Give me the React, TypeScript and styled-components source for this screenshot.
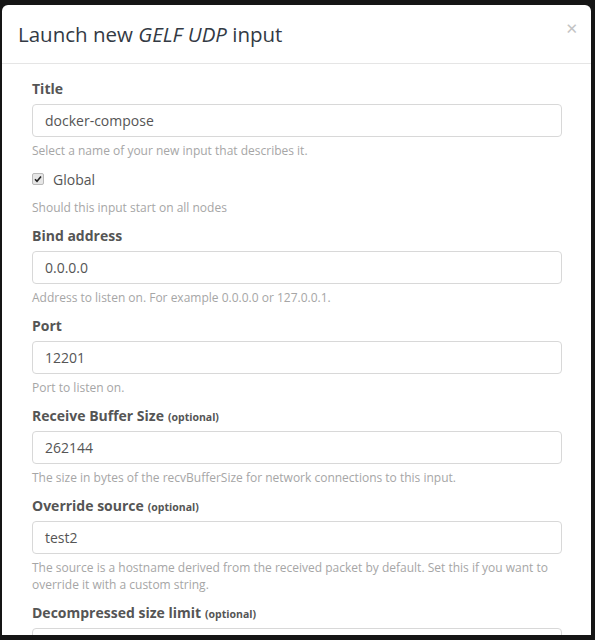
import React from 'react';
import styled, { createGlobalStyle } from 'styled-components';

const GlobalStyle = createGlobalStyle`
  html, body {
    margin: 0;
    padding: 0;
    background: #141414;
  }
  body {
    font-family: "Open Sans", "DejaVu Sans", sans-serif;
    overflow: hidden;
  }
`;

const Backdrop = styled.div`
  width: 595px;
  height: 640px;
  background: #151515;
  padding: 5px 4px 0 2px;
  box-sizing: border-box;
  overflow: hidden;
`;

const Modal = styled.div`
  background: #fff;
  border-radius: 6px 6px 0 0;
  height: 630px;
  overflow: hidden;
`;

const Header = styled.div`
  display: flex;
  align-items: center;
  justify-content: space-between;
  padding: 15px 13px 15px 16px;
  border-bottom: 1px solid #e5e5e5;
`;

const Title = styled.h4`
  margin: 0;
  font-size: 20.5px;
  font-weight: 400;
  line-height: 28px;
  color: #333a44;

  em {
    font-style: italic;
  }
`;

const Close = styled.button`
  border: 0;
  background: none;
  padding: 0;
  margin: -9px 0 0 0;
  font-family: "DejaVu Sans", sans-serif;
  font-size: 15px;
  line-height: 1;
  color: #c4c4c4;
`;

const Body = styled.div`
  padding: 15px 29px 0 30px;
`;

const Group = styled.div`
  margin-bottom: 10px;
`;

const Label = styled.label`
  display: block;
  height: 20px;
  font-size: 14px;
  font-weight: 700;
  line-height: 20px;
  color: #555;
  margin-bottom: 5px;
`;

const Optional = styled.small`
  font-size: 10.5px;
  font-weight: 700;
  line-height: 1;
  margin-left: 4px;
`;

const Input = styled.div`
  height: 33px;
  box-sizing: border-box;
  border: 1px solid #d8d8d8;
  border-radius: 4px;
  padding: 0 12px;
  display: flex;
  align-items: center;
  font-size: 14px;
  color: #555;
`;

const Help = styled.p<{ $tight?: boolean }>`
  margin: ${(p) => (p.$tight ? '1px' : '5px')} 0 0;
  font-size: 12px;
  line-height: 17px;
  color: #a6a6a6;
`;

const CheckRow = styled.div`
  display: flex;
  align-items: center;
  gap: 9px;
  height: 20px;
  margin-top: 1px;
  margin-bottom: 10px;
  font-size: 14px;
  color: #555;
`;

const Box = styled.span`
  width: 10px;
  height: 10px;
  border: 1px solid #b9b9b9;
  border-radius: 2px;
  background: #e6e6e6;
  display: flex;
  align-items: center;
  justify-content: center;
`;

type FieldProps = {
  label: string;
  optional?: boolean;
  value?: string;
  help?: React.ReactNode;
};

const Field: React.FC<FieldProps> = ({ label, optional, value, help }) => (
  <Group>
    <Label>
      {label}
      {optional && <Optional>(optional)</Optional>}
    </Label>
    <Input>{value}</Input>
    {help && <Help>{help}</Help>}
  </Group>
);

const App: React.FC = () => {
  return (
    <>
      <GlobalStyle />
      <Backdrop>
        <Modal>
          <Header>
            <Title>
              Launch new <em>GELF UDP</em> input
            </Title>
            <Close>✕</Close>
          </Header>
          <Body>
            <Field
              label="Title"
              value="docker-compose"
              help="Select a name of your new input that describes it."
            />
            <Group>
              <CheckRow>
                <Box>
                  <svg width="8" height="8" viewBox="0 0 8 8">
                    <path d="M1 4.2 L3 6.2 L7 1.5" fill="none" stroke="#222" strokeWidth="1.6" />
                  </svg>
                </Box>
                Global
              </CheckRow>
              <Help $tight>Should this input start on all nodes</Help>
            </Group>
            <Field
              label="Bind address"
              value="0.0.0.0"
              help="Address to listen on. For example 0.0.0.0 or 127.0.0.1."
            />
            <Field label="Port" value="12201" help="Port to listen on." />
            <Field
              label="Receive Buffer Size"
              optional
              value="262144"
              help="The size in bytes of the recvBufferSize for network connections to this input."
            />
            <Field
              label="Override source"
              optional
              value="test2"
              help="The source is a hostname derived from the received packet by default. Set this if you want to override it with a custom string."
            />
            <Field label="Decompressed size limit" optional />
          </Body>
        </Modal>
      </Backdrop>
    </>
  );
};

export default App;
